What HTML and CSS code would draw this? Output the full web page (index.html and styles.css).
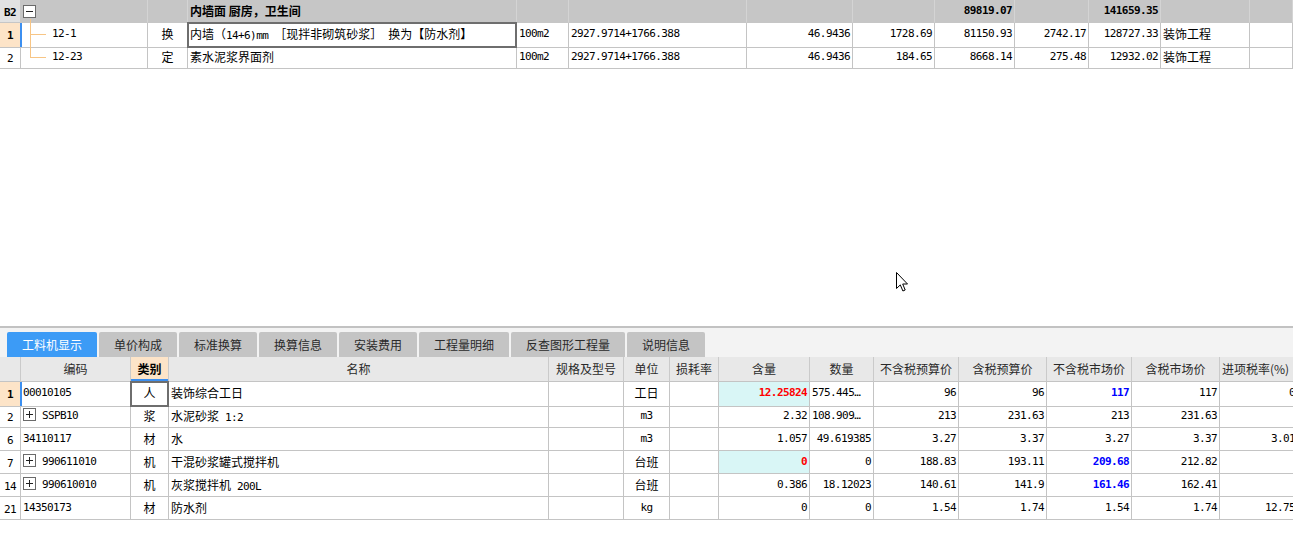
FILE: index.html
```html
<!DOCTYPE html>
<html lang="zh-CN">
<head>
<meta charset="utf-8">
<title>工料机显示</title>
<link rel="stylesheet" href="styles.css">
</head>
<body>
<section class="upper">
  <div class="grid top">
    <div class="row head">
      <div class="cell c idx b2"><span class="m b">B2</span></div>
      <div class="cell tree-root"><svg class="box" width="13" height="13" viewBox="0 0 13 13"><rect x="0.5" y="0.5" width="12" height="12" fill="#fff" stroke="#6a6a6a"/><path d="M3 6.5H10" stroke="#222"/></svg></div>
      <div class="cell"></div>
      <div class="cell bold">内墙面 厨房，卫生间</div>
      <div class="cell"></div>
      <div class="cell"></div>
      <div class="cell"></div>
      <div class="cell"></div>
      <div class="cell r m b">89819.07</div>
      <div class="cell"></div>
      <div class="cell r m b">141659.35</div>
      <div class="cell"></div>
      <div class="cell"></div>
    </div>
    <div class="row">
      <div class="cell c idx cur"><span class="m b">1</span></div>
      <div class="cell branch m">12-1</div>
      <div class="cell c">换</div>
      <div class="cell sel">内墙（<span class="m">14+6)mm </span>［现拌非砌筑砂浆］<span class="m"> </span>换为【防水剂】</div>
      <div class="cell m">100m2</div>
      <div class="cell m">2927.9714+1766.388</div>
      <div class="cell r m">46.9436</div>
      <div class="cell r m">1728.69</div>
      <div class="cell r m">81150.93</div>
      <div class="cell r m">2742.17</div>
      <div class="cell r m">128727.33</div>
      <div class="cell">装饰工程</div>
      <div class="cell"></div>
    </div>
    <div class="row">
      <div class="cell c idx"><span class="m">2</span></div>
      <div class="cell branch last m">12-23</div>
      <div class="cell c">定</div>
      <div class="cell">素水泥浆界面剂</div>
      <div class="cell m">100m2</div>
      <div class="cell m">2927.9714+1766.388</div>
      <div class="cell r m">46.9436</div>
      <div class="cell r m">184.65</div>
      <div class="cell r m">8668.14</div>
      <div class="cell r m">275.48</div>
      <div class="cell r m">12932.02</div>
      <div class="cell">装饰工程</div>
      <div class="cell"></div>
    </div>
  </div>
</section>

<section class="lower">
  <nav class="tabs">
    <div class="tab active">工料机显示</div>
    <div class="tab">单价构成</div>
    <div class="tab">标准换算</div>
    <div class="tab">换算信息</div>
    <div class="tab">安装费用</div>
    <div class="tab">工程量明细</div>
    <div class="tab">反查图形工程量</div>
    <div class="tab">说明信息</div>
  </nav>
  <div class="grid bottom">
    <div class="row head">
      <div class="cell"></div>
      <div class="cell c">编码</div>
      <div class="cell c hsel">类别</div>
      <div class="cell c">名称</div>
      <div class="cell c">规格及型号</div>
      <div class="cell c">单位</div>
      <div class="cell c">损耗率</div>
      <div class="cell c">含量</div>
      <div class="cell c">数量</div>
      <div class="cell c">不含税预算价</div>
      <div class="cell c">含税预算价</div>
      <div class="cell c">不含税市场价</div>
      <div class="cell c">含税市场价</div>
      <div class="cell">进项税率(%)</div>
    </div>
    <div class="row">
      <div class="cell c idx cur"><span class="m b">1</span></div>
      <div class="cell m">00010105</div>
      <div class="cell c sel">人</div>
      <div class="cell">装饰综合工日</div>
      <div class="cell"></div>
      <div class="cell c">工日</div>
      <div class="cell"></div>
      <div class="cell r m hl red">12.25824</div>
      <div class="cell m">575.445…</div>
      <div class="cell r m">96</div>
      <div class="cell r m">96</div>
      <div class="cell r m blue">117</div>
      <div class="cell r m">117</div>
      <div class="cell r m">0</div>
    </div>
    <div class="row">
      <div class="cell c idx"><span class="m">2</span></div>
      <div class="cell m"><svg class="box" width="13" height="13" viewBox="0 0 13 13"><rect x="0.5" y="0.5" width="12" height="12" fill="#fff" stroke="#6a6a6a"/><path d="M3 6.5H10M6.5 3V10" stroke="#222"/></svg>SSPB10</div>
      <div class="cell c">浆</div>
      <div class="cell">水泥砂浆<span class="m"> 1:2</span></div>
      <div class="cell"></div>
      <div class="cell c m">m3</div>
      <div class="cell"></div>
      <div class="cell r m">2.32</div>
      <div class="cell m">108.909…</div>
      <div class="cell r m">213</div>
      <div class="cell r m">231.63</div>
      <div class="cell r m">213</div>
      <div class="cell r m">231.63</div>
      <div class="cell"></div>
    </div>
    <div class="row">
      <div class="cell c idx"><span class="m">6</span></div>
      <div class="cell m">34110117</div>
      <div class="cell c">材</div>
      <div class="cell">水</div>
      <div class="cell"></div>
      <div class="cell c m">m3</div>
      <div class="cell"></div>
      <div class="cell r m">1.057</div>
      <div class="cell r m">49.619385</div>
      <div class="cell r m">3.27</div>
      <div class="cell r m">3.37</div>
      <div class="cell r m">3.27</div>
      <div class="cell r m">3.37</div>
      <div class="cell r m">3.01</div>
    </div>
    <div class="row">
      <div class="cell c idx"><span class="m">7</span></div>
      <div class="cell m"><svg class="box" width="13" height="13" viewBox="0 0 13 13"><rect x="0.5" y="0.5" width="12" height="12" fill="#fff" stroke="#6a6a6a"/><path d="M3 6.5H10M6.5 3V10" stroke="#222"/></svg>990611010</div>
      <div class="cell c">机</div>
      <div class="cell">干混砂浆罐式搅拌机</div>
      <div class="cell"></div>
      <div class="cell c">台班</div>
      <div class="cell"></div>
      <div class="cell r m hl red">0</div>
      <div class="cell r m">0</div>
      <div class="cell r m">188.83</div>
      <div class="cell r m">193.11</div>
      <div class="cell r m blue">209.68</div>
      <div class="cell r m">212.82</div>
      <div class="cell"></div>
    </div>
    <div class="row">
      <div class="cell c idx"><span class="m">14</span></div>
      <div class="cell m"><svg class="box" width="13" height="13" viewBox="0 0 13 13"><rect x="0.5" y="0.5" width="12" height="12" fill="#fff" stroke="#6a6a6a"/><path d="M3 6.5H10M6.5 3V10" stroke="#222"/></svg>990610010</div>
      <div class="cell c">机</div>
      <div class="cell">灰浆搅拌机<span class="m"> 200L</span></div>
      <div class="cell"></div>
      <div class="cell c">台班</div>
      <div class="cell"></div>
      <div class="cell r m">0.386</div>
      <div class="cell r m">18.12023</div>
      <div class="cell r m">140.61</div>
      <div class="cell r m">141.9</div>
      <div class="cell r m blue">161.46</div>
      <div class="cell r m">162.41</div>
      <div class="cell"></div>
    </div>
    <div class="row">
      <div class="cell c idx"><span class="m">21</span></div>
      <div class="cell m">14350173</div>
      <div class="cell c">材</div>
      <div class="cell">防水剂</div>
      <div class="cell"></div>
      <div class="cell c m">kg</div>
      <div class="cell"></div>
      <div class="cell r m">0</div>
      <div class="cell r m">0</div>
      <div class="cell r m">1.54</div>
      <div class="cell r m">1.74</div>
      <div class="cell r m">1.54</div>
      <div class="cell r m">1.74</div>
      <div class="cell r m">12.75</div>
    </div>
  </div>
</section>

<svg class="cursor" width="13" height="21" viewBox="0 0 13 21"><path d="M0.5 0.5V16.5L4.3 12.9L6.9 19L9.2 18L6.7 12H11.5Z" fill="#fff" stroke="#000" stroke-width="1" stroke-linejoin="miter"/></svg>
</body>
</html>
```

FILE: styles.css
```css
* {
  box-sizing: border-box;
}

html,
body {
  margin: 0;
  padding: 0;
}

body {
  position: relative;
  width: 1293px;
  height: 540px;
  overflow: hidden;
  background: #ffffff;
  color: #000000;
  font-family: "Noto Sans CJK SC", "Noto Sans", sans-serif;
  font-size: 12px;
}

/* ---------- generic grid ---------- */
.grid {
  width: 1293px;
  overflow: hidden;
}

.row {
  display: grid;
  height: 23px;
}

.cell {
  position: relative;
  height: 100%;
  padding: 0 2px;
  border-right: 1px solid #c4c4c4;
  border-bottom: 1px solid #c4c4c4;
  line-height: 22px;
  white-space: nowrap;
  overflow: hidden;
}

.m {
  font-family: "DejaVu Sans Mono", "Liberation Mono", monospace;
  font-size: 11px;
  letter-spacing: -0.6px;
}

.b,
.bold {
  font-weight: bold;
}

.r {
  text-align: right;
}

.c {
  text-align: center;
}

.red {
  color: #ff0000;
  font-weight: bold;
}

.blue {
  color: #0000ff;
  font-weight: bold;
}

.hl {
  background: #d9f6f6;
}

.idx {
  padding: 0;
}

.cur {
  background: #fde4c8;
  overflow: visible;
}

.cur::after {
  content: "";
  position: absolute;
  top: 0;
  bottom: 0;
  right: -2px;
  width: 2px;
  background: #3c8ff0;
  z-index: 2;
}

.sel {
  overflow: visible;
}

.sel::after {
  content: "";
  position: absolute;
  left: -1px;
  top: -1px;
  right: -1px;
  bottom: -1px;
  border: 2px solid #6e6e6e;
  z-index: 3;
}

.box {
  display: inline-block;
  vertical-align: -2px;
  margin: 0 6px 0 0;
}

/* ---------- upper grid ---------- */
.upper {
  height: 326px;
}

.top .row {
  grid-template-columns: 21px 127px 40px 329px 52px 178px 106px 82px 80px 74px 72px 89px 43px;
}

.top .head .cell {
  background: #c6c6c6;
  border-right-color: #d4d4d4;
  border-bottom-color: #c6c6c6;
}

.top .head .b2 {
  background: #e2e2e2;
  border-right-color: #c6c6c6;
}

.tree-root {
  overflow: visible;
  padding-left: 2px;
}

.tree-root .box {
  vertical-align: -2px;
}

.tree-root::after {
  content: "";
  position: absolute;
  left: 9px;
  top: 19px;
  bottom: -1px;
  width: 1px;
  background: #f7c585;
}

.branch {
  padding-left: 31px;
  overflow: visible;
}

.branch::before {
  content: "";
  position: absolute;
  left: 9px;
  top: 0;
  bottom: -1px;
  width: 1px;
  background: #f7c585;
}

.branch.last::before {
  bottom: auto;
  height: 11px;
}

.branch::after {
  content: "";
  position: absolute;
  left: 9px;
  top: 11px;
  width: 16px;
  height: 1px;
  background: #f7c585;
}

/* ---------- lower panel ---------- */
.lower {
  border-top: 2px solid #c2c2c2;
}

.tabs {
  display: flex;
  gap: 2px;
  height: 29px;
  padding: 4px 0 0 7px;
  background: #f3f3f3;
}

.tab {
  height: 25px;
  padding: 0 15px;
  line-height: 25px;
  background: #c4c4c4;
  color: #2a2a2a;
  border-radius: 2px 2px 0 0;
  white-space: nowrap;
}

.tab.active {
  background: #3c9bf6;
  color: #ffffff;
}

.bottom .row {
  grid-template-columns: 21px 110px 38px 380px 75px 46px 49px 91px 64px 85px 88px 85px 88px 78px;
}

.bottom .head {
  height: 25px;
}

.bottom .head .cell {
  background: #e8e8e8;
  color: #2a2a2a;
  line-height: 24px;
  border-right-color: #cacaca;
  border-bottom-color: #c4c4c4;
}

.bottom .head .hsel {
  background: #fde4c8;
  color: #000;
  font-weight: bold;
}

.bottom .head .hsel::after {
  content: "";
  position: absolute;
  left: 0;
  right: 0;
  bottom: 0;
  height: 2px;
  background: #3c8ff0;
}

/* ---------- mouse pointer over the canvas ---------- */
.cursor {
  position: absolute;
  left: 896px;
  top: 272px;
}
```
